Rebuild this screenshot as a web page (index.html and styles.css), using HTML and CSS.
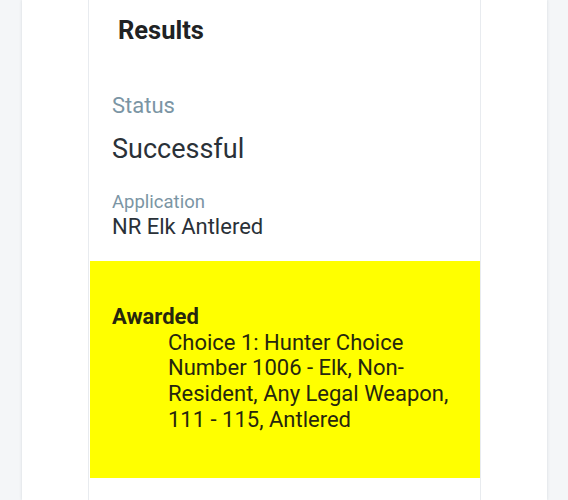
FILE: index.html
```html
<!DOCTYPE html>
<html lang="en">
<head>
    <meta charset="UTF-8">
    <title>Draw Results</title>
    <link rel="stylesheet" href="styles.css">
</head>
<body>

<div class="page">
    <div class="results">
        <h2 class="results-title">Results</h2>

        <div class="field">
            <div class="label">Status</div>
            <div class="status">Successful</div>
        </div>

        <div class="field">
            <div class="label label-small">Application</div>
            <div class="value">NR Elk Antlered</div>
        </div>

        <dl class="awarded">
            <dt>Awarded</dt>
            <dd>Choice 1: Hunter Choice Number 1006 - Elk, Non-Resident, Any Legal Weapon, 111 - 115, Antlered</dd>
        </dl>
    </div>
</div>

</body>
</html>
```

FILE: styles.css
```css
body {
    margin: 0;
    background: #f4f6f8;
    font-family: Roboto, "Liberation Sans", sans-serif;
    color: #2a3138;
}
.page {
    margin: 0 21px 0 22px;
    padding: 0 66px;
    min-height: 500px;
    background: #fff;
    box-shadow: 0 0 3px rgba(40, 60, 80, 0.15);
}
.results {
    min-height: 500px;
    border-left: 1px solid #e8ebef;
    border-right: 1px solid #e8ebef;
}
.results-title {
    margin: 0;
    padding: 15px 0 0 29px;
    font-size: 25.5px;
    font-weight: bold;
    color: #202224;
}
.field {
    padding: 0 23px;
}
.label {
    margin-top: 48px;
    font-size: 22px;
    color: #7b95a4;
}
.label-small {
    margin-top: 26px;
    font-size: 18.5px;
}
.status {
    margin-top: 15px;
    font-size: 27px;
}
.value {
    margin-top: 1px;
    font-size: 22px;
}
.awarded {
    margin: 22px 0 0 1px;
    padding: 43px 20px 45px 22px;
    background: #ffff00;
    color: #26260e;
    font-size: 22px;
    line-height: 25.7px;
}
.awarded dt {
    font-weight: bold;
}
.awarded dd {
    margin-left: 56px;
}
```
